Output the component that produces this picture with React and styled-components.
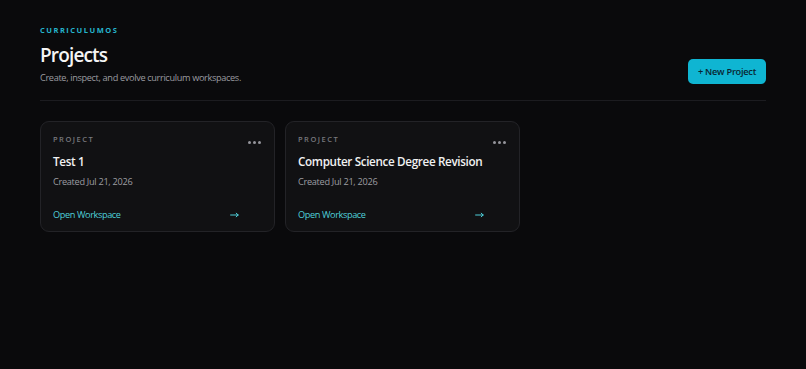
import React from "react";
import styled, { createGlobalStyle } from "styled-components";

const Global = createGlobalStyle`
  html, body { margin: 0; padding: 0; background: #0a0a0c; }
  body { font-family: "Open Sans", "Noto Sans", sans-serif; color: #f2f2f2; }
  * { box-sizing: border-box; }
`;

const Page = styled.div`
  min-height: 369px;
  background: #0a0a0c;
  padding: 25px 40px 40px;
`;

const Header = styled.header`
  display: flex;
  justify-content: space-between;
  align-items: flex-end;
  padding-bottom: 15px;
  border-bottom: 1px solid #1c1c20;
`;

const TitleBlock = styled.div`
  display: flex;
  flex-direction: column;
`;

const Eyebrow = styled.div`
  font-size: 7.5px;
  font-weight: 700;
  letter-spacing: 1.5px;
  color: #25b5cc;
  line-height: 11px;
`;

const Title = styled.h1`
  margin: 6px 0 0;
  font-size: 19px;
  font-weight: 600;
  line-height: 26px;
  color: #f5f5f5;
  letter-spacing: -0.85px;
`;

const Subtitle = styled.p`
  margin: 3px 0 0;
  font-size: 9.2px;
  line-height: 14px;
  color: #9b9ba0;
  letter-spacing: -0.35px;
`;

const PrimaryButton = styled.button`
  height: 25px;
  width: 78px;
  margin-bottom: 1px;
  border: none;
  border-radius: 5px;
  background: #0fb5d2;
  color: #0a2430;
  font-family: inherit;
  font-size: 9.2px;
  font-weight: 600;
  letter-spacing: -0.25px;
  cursor: pointer;
`;

const Grid = styled.div`
  display: grid;
  grid-template-columns: repeat(3, 235px);
  gap: 10px;
  margin-top: 20px;
`;

const Card = styled.div`
  height: 111px;
  background: #111113;
  border: 1px solid #232327;
  border-radius: 9px;
  padding: 12px 12px 10px;
  display: flex;
  flex-direction: column;
`;

const CardTop = styled.div`
  display: flex;
  justify-content: space-between;
  align-items: flex-start;
`;

const Label = styled.div`
  font-size: 7.5px;
  font-weight: 600;
  letter-spacing: 1.5px;
  color: #78787d;
  line-height: 11px;
`;

const MenuButton = styled.button`
  background: none;
  border: none;
  padding: 0;
  margin: 7px 1px 0 0;
  display: flex;
  gap: 2px;
  cursor: pointer;
`;

const Dot = styled.span`
  width: 3px;
  height: 3px;
  border-radius: 50%;
  background: #95959b;
`;

const CardTitle = styled.h2`
  margin: 8px 0 0;
  font-size: 11.7px;
  font-weight: 600;
  line-height: 16px;
  color: #f2f2f2;
  letter-spacing: -0.35px;
`;

const Meta = styled.div`
  margin-top: 5.5px;
  font-size: 9.2px;
  line-height: 13px;
  color: #9d9da2;
  letter-spacing: -0.3px;
`;

const Footer = styled.div`
  margin-top: auto;
  display: flex;
  justify-content: space-between;
  align-items: center;
  padding-right: 23px;
  height: 13px;
`;

const Link = styled.a`
  font-size: 9.2px;
  color: #4fcfd9;
  text-decoration: none;
  line-height: 13px;
  letter-spacing: -0.4px;
`;

const ArrowIcon = styled.svg`
  display: block;
  width: 9px;
  height: 6px;
  color: #4fcfd9;
`;

const Arrow = () => (
  <ArrowIcon viewBox="0 0 9 6" fill="none" stroke="currentColor" strokeWidth="1" strokeLinecap="round" strokeLinejoin="round">
    <path d="M0.6 3H8.2M6.2 1.2L8.2 3L6.2 4.8" />
  </ArrowIcon>
);

const projects = [
  { name: "Test 1", created: "Jul 21, 2026" },
  { name: "Computer Science Degree Revision", created: "Jul 21, 2026" },
];

export default function App() {
  return (
    <>
      <Global />
      <Page>
        <Header>
          <TitleBlock>
            <Eyebrow>CURRICULUMOS</Eyebrow>
            <Title>Projects</Title>
            <Subtitle>Create, inspect, and evolve curriculum workspaces.</Subtitle>
          </TitleBlock>
          <PrimaryButton>+ New Project</PrimaryButton>
        </Header>
        <Grid>
          {projects.map((p) => (
            <Card key={p.name}>
              <CardTop>
                <Label>PROJECT</Label>
                <MenuButton aria-label="More">
                  <Dot />
                  <Dot />
                  <Dot />
                </MenuButton>
              </CardTop>
              <CardTitle>{p.name}</CardTitle>
              <Meta>Created {p.created}</Meta>
              <Footer>
                <Link href="#">Open Workspace</Link>
                <Arrow />
              </Footer>
            </Card>
          ))}
        </Grid>
      </Page>
    </>
  );
}
